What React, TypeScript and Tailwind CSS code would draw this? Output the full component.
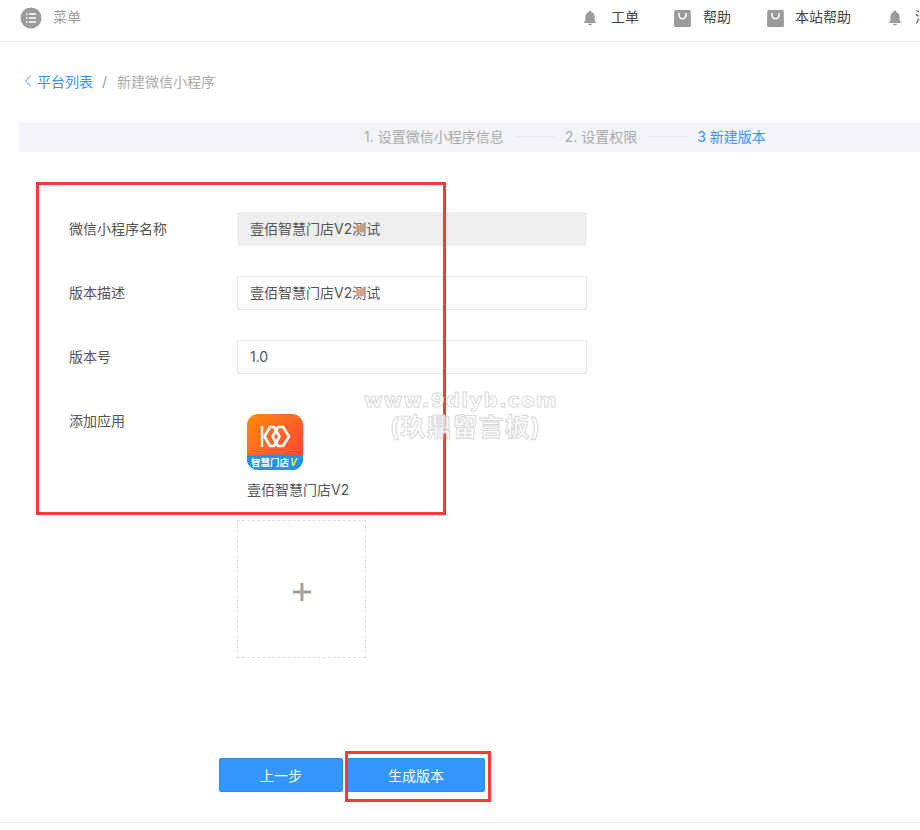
import React from 'react';

const Bell = () => (
  <svg viewBox="0 0 14 16" className="h-[16px] w-[14px] shrink-0" fill="#9b9b9b">
    <path d="M7 0.5c.7 0 1.2.5 1.2 1.1v.5C10.4 2.7 11.6 4.6 11.6 7v3.4L13.600 13H.4l2-2.600V7c0-2.400 1.200-4.300 3.400-4.900v-.5C5.800 1 6.300.5 7 .5z" />
    <path d="M5 13.800h4c0 1-.9 1.700-2 1.700s-2-.7-2-1.700z" />
  </svg>
);

const Bag = () => (
  <svg viewBox="0 0 17 17" className="h-[17px] w-[17px] shrink-0">
    <path d="M1.500 0h14c.7 0 1.100.4 1.200 1L17 15.500c0 .9-.6 1.500-1.500 1.500h-14C.6 17 0 16.400 0 15.500L.3 1C.4.4.8 0 1.500 0z" fill="#9b9b9b" />
    <path d="M5 3.600v1.700a3.500 3.500 0 0 0 7 0V3.600" fill="none" stroke="#fff" strokeWidth="1.500" strokeLinecap="round" />
  </svg>
);

const MenuIcon = () => (
  <svg viewBox="0 0 22 22" className="h-[22px] w-[22px] shrink-0">
    <circle cx="11" cy="11" r="10.500" fill="#9b9b9b" />
    <path d="M6 7h1.600M9 7h7M6 11h1.600M9 11h7M6 15h1.600M9 15h7" stroke="#fff" strokeWidth="1.500" />
  </svg>
);

const AppIcon = () => (
  <svg viewBox="0 0 56 56" className="h-14 w-14">
    <defs>
      <linearGradient id="appbg" x1="0" y1="0" x2="1" y2="1">
        <stop offset="0" stopColor="#ff8c0a" />
        <stop offset="1" stopColor="#ff3a3f" />
      </linearGradient>
      <clipPath id="appclip">
        <rect width="56" height="56" rx="11" />
      </clipPath>
    </defs>
    <g clipPath="url(#appclip)">
      <rect width="56" height="56" fill="url(#appbg)" />
      <path d="M0 42c18-2 38-2 56 0v14H0z" fill="#1b96e8" />
      <path d="M15 12v21" stroke="#fff" strokeWidth="2.400" fill="none" />
      <path d="M27 13h-4l-5.500 9.500 5.500 9.500h4l5.500-9.500z" stroke="#fff" strokeWidth="2.600" fill="none" strokeLinejoin="round" />
      <path d="M36 13h-5l-5.500 9.500 5.500 9.500h5l6-9.500z" stroke="#fff" strokeWidth="2.600" fill="none" strokeLinejoin="round" />
      <text x="4" y="52" fontSize="9.500" fontWeight="700" fill="#fff" fontFamily="'Noto Sans CJK SC', sans-serif">智慧门店</text>
      <text x="43" y="52" fontSize="10" fontWeight="700" fontStyle="italic" fill="#f6e52e" fontFamily="'Liberation Sans', sans-serif">V</text>
    </g>
  </svg>
);

const NavItem = ({ icon, label, className }: { icon: React.ReactNode; label: string; className: string }) => (
  <div className={`flex items-center shrink-0 ${className}`}>
    {icon}
    <span className="mb-[3px] whitespace-nowrap">{label}</span>
  </div>
);

const Field = ({ label, value, disabled }: { label: string; value: string; disabled?: boolean }) => (
  <div className="flex h-[34px]">
    <label className="w-[200px] pl-[32px] text-[#555] leading-[33px] shrink-0">{label}</label>
    <div
      className={`w-[350px] h-[34px] border px-3 leading-[32px] text-[#555] ${
        disabled ? 'bg-[#eeeeee] border-[#eeeeee]' : 'bg-white border-[#e9e9e9]'
      }`}
    >
      {value}
    </div>
  </div>
);

export default function App() {
  return (
    <div className="relative h-[830px] w-[920px] overflow-hidden bg-white text-[14px] font-['Inter','Noto_Sans_CJK_SC',sans-serif]">
      <header className="flex h-[42px] items-center border-b border-[#e7e7e7] pb-[5px]">
        <div className="flex w-[583px] shrink-0 items-center pl-[20px] text-[#9b9b9b]">
          <MenuIcon />
          <span className="ml-[11px] mb-[3px]">菜单</span>
        </div>
        <NavItem icon={<Bell />} label="工单" className="w-[91px] gap-[14px] text-[#444]" />
        <NavItem icon={<Bag />} label="帮助" className="w-[93px] gap-[12px] text-[#444]" />
        <NavItem icon={<Bag />} label="本站帮助" className="w-[121px] gap-[11px] text-[#444]" />
        <NavItem icon={<Bell />} label="消息" className="gap-[13px] text-[#444]" />
      </header>

      <nav className="flex h-[80px] items-center pb-[2px] pl-[24px] text-[#aaaaaa]">
        <svg viewBox="0 0 8 12" className="h-[12px] w-[8px] mr-[5px]" fill="none" stroke="#3296fa" strokeWidth="1">
          <path d="M7 .5 1.500 6 7 11.500" />
        </svg>
        <span className="text-[#3296fa]">平台列表</span>
        <span className="ml-[9px] mr-[10px] text-[#999]">/</span>
        <span>新建微信小程序</span>
      </nav>

      <div className="ml-[19px] flex h-[30px] items-center bg-[#f3f4f8] pb-[2px] pl-[345px] text-[#aaaaaa]">
        <span>1. 设置微信小程序信息</span>
        <span className="ml-[12px] mr-[10px] h-px w-[39px] bg-[#e4e5ea]" />
        <span>2. 设置权限</span>
        <span className="ml-[11px] mr-[9px] h-px w-[40px] bg-[#e4e5ea]" />
        <span className="text-[#3296fa]">3 新建版本</span>
      </div>

      <main className="ml-[37px] mt-[60px] flex flex-col gap-[30px]">
        <Field label="微信小程序名称" value="壹佰智慧门店V2测试" disabled />
        <Field label="版本描述" value="壹佰智慧门店V2测试" />
        <Field label="版本号" value="1.0" />
        <div className="flex">
          <label className="w-[200px] pl-[32px] text-[#555] leading-[33px] shrink-0">添加应用</label>
          <div className="flex flex-col pt-[10px]">
            <div className="pl-[10px]">
              <AppIcon />
              <div className="mt-[9px] leading-[22px] text-[#555]">壹佰智慧门店V2</div>
            </div>
            <div className="mt-[19px] flex h-[138px] w-[129px] items-center justify-center border border-dashed border-[#dddddd] pt-[6px]">
              <svg viewBox="0 0 18 18" className="h-[18px] w-[18px]">
                <path d="M9 0v18M0 9h18" stroke="#a89f97" strokeWidth="3" />
              </svg>
            </div>
          </div>
        </div>
      </main>

      <div className="ml-[219px] mt-[100px] flex gap-[4px] text-white">
        <button className="h-[34px] w-[124px] rounded-[2px] border border-[#2b8cf0] bg-[#3296fa]">上一步</button>
        <button className="h-[34px] w-[138px] rounded-[2px] border border-[#2b8cf0] bg-[#3296fa]">生成版本</button>
      </div>

      <div className="mt-[30px] h-px bg-[#e7e7e7]" />

      {/* annotation frames and watermark sit over the page */}
      <div className="pointer-events-none absolute left-[36px] top-[182px] h-[333px] w-[410px] border-[3px] border-[#f63a3a]" />
      <div className="pointer-events-none absolute left-[345px] top-[751px] h-[51px] w-[146px] border-[3px] border-[#f63a3a]" />
      <div className="pointer-events-none absolute left-[341px] top-[387px] w-[240px] text-center font-bold leading-[27px] text-white/80 [-webkit-text-stroke:1px_#d8d8d8]">
        <div className="text-[20px] tracking-[1.200px] font-['DejaVu_Sans',sans-serif]">www.9dlyb.com</div>
        <div className="ml-[9px] text-[25px] tracking-[1px]">(玖鼎留言板)</div>
      </div>
    </div>
  );
}
